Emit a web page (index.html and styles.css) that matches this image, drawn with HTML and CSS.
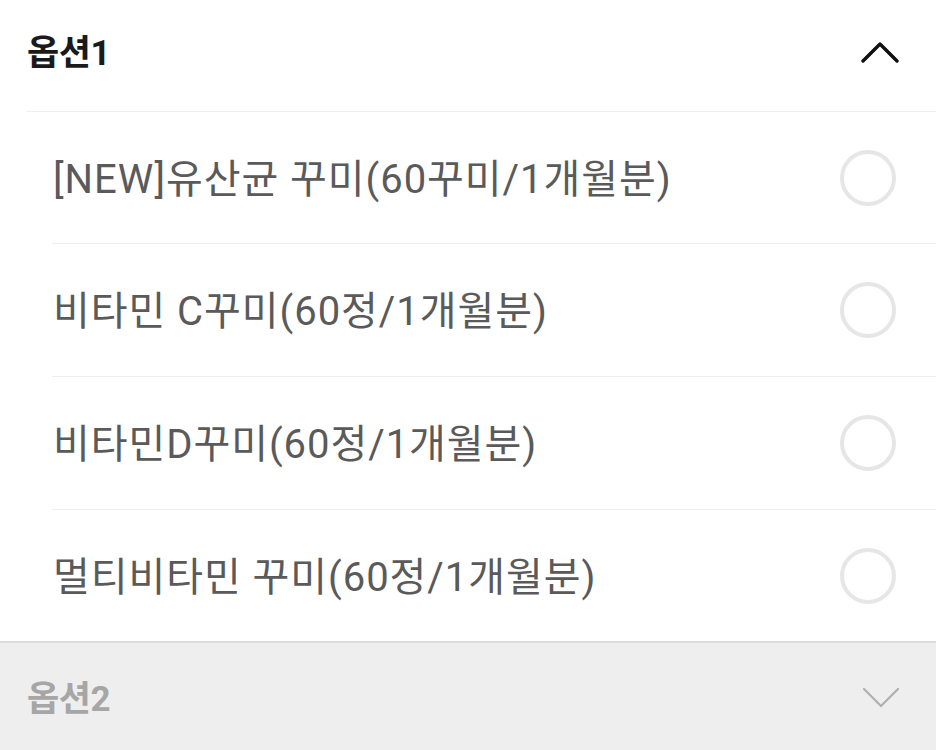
FILE: index.html
```html
<!DOCTYPE html>
<html lang="ko">
<head>
<meta charset="utf-8">
<title>옵션 선택</title>
<link rel="stylesheet" href="styles.css">
</head>
<body>
<div class="sheet">
  <section class="group open">
    <div class="group-head">
      <span class="group-title">옵션1</span>
      <svg class="chev chev-up" width="38" height="22" viewBox="0 0 38 22"><polyline points="2,20 19,3 36,20" fill="none" stroke="#111" stroke-width="3.4" stroke-linecap="round" stroke-linejoin="round"/></svg>
    </div>
    <ul class="options">
      <li class="option"><span class="option-label">[NEW]유산균 꾸미(60꾸미/1개월분)</span><span class="radio"></span></li>
      <li class="option"><span class="option-label">비타민 C꾸미(60정/1개월분)</span><span class="radio"></span></li>
      <li class="option"><span class="option-label">비타민D꾸미(60정/1개월분)</span><span class="radio"></span></li>
      <li class="option"><span class="option-label">멀티비타민 꾸미(60정/1개월분)</span><span class="radio"></span></li>
    </ul>
  </section>
  <section class="group closed">
    <div class="group-head">
      <span class="group-title">옵션2</span>
      <svg class="chev chev-down" width="38" height="22" viewBox="0 0 38 22"><polyline points="2,2 19,19 36,2" fill="none" stroke="#b0b0b0" stroke-width="2.2" stroke-linecap="round" stroke-linejoin="round"/></svg>
    </div>
  </section>
</div>
</body>
</html>
```

FILE: styles.css
```css
html, body {
  margin: 0;
  padding: 0;
  background: #ffffff;
}
body {
  width: 936px;
  height: 750px;
  overflow: hidden;
  font-family: "Roboto", "Noto Sans CJK KR", sans-serif;
}
.sheet {
  display: flex;
  flex-direction: column;
}
.group.open {
  padding-left: 26px;
  background: #ffffff;
}
.group-head {
  display: flex;
  align-items: center;
  justify-content: space-between;
  box-sizing: border-box;
  padding-right: 37px;
}
.group.open .group-head {
  border-bottom: 1px solid #eceeef;
  height: 112px;
  padding-bottom: 12px;
}
.group-title {
  font-family: "Roboto", "Noto Sans CJK KR", sans-serif;
  font-weight: 700;
  font-size: 35px;
  letter-spacing: -0.5px;
  color: #1a1a1a;
  padding-left: 1px;
}
.chev {
  display: block;
}
.chev-up {
  margin-top: 4px;
}
.options {
  list-style: none;
  margin: 0;
  padding: 0 0 0 26px;
}
.option {
  display: flex;
  align-items: center;
  justify-content: space-between;
  height: 133px;
  box-sizing: border-box;
  padding-right: 40px;
  border-bottom: 1px solid #eceeef;
}
.option:first-child {
  height: 132px;
}
.option:last-child {
  border-bottom: none;
  height: 131px;
}
.option-label {
  font-size: 40px;
  letter-spacing: 0.95px;
  color: #5a5a5a;
  padding-left: 1px;
  margin-top: -4px;
}
.radio {
  width: 56px;
  height: 56px;
  box-sizing: border-box;
  border: 4px solid #e6e6e6;
  border-radius: 50%;
}
.group.closed {
  background: #eeeeee;
  border-top: 2px solid #dcdcdc;
  padding-left: 26px;
  padding-bottom: 24px;
}
.group.closed .group-head {
  height: 104px;
  padding-right: 36px;
}
.group.closed .group-title {
  color: #a6a6a6;
}
.chev-down {
  margin-top: 6px;
}
```
